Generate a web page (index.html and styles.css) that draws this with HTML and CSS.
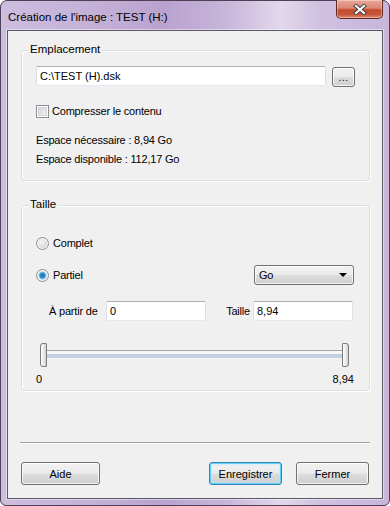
FILE: index.html
```html
<!DOCTYPE html>
<html lang="fr">
<head>
  <meta charset="UTF-8" />
  <title>Création de l'image</title>
  <link rel="stylesheet" href="styles.css">
</head>
<body>

<div class="window">
  <div class="titlebar">
    <span class="title">Création de l'image : TEST (H:)</span>
    <button class="close-btn" title="Fermer">
      <svg width="16" height="11" viewBox="0 0 16 11">
        <path d="M4 2 L12 9 M12 2 L4 9" stroke="#3e3a40" stroke-width="4" stroke-linecap="square" fill="none"/>
        <path d="M4 2 L12 9 M12 2 L4 9" stroke="#ffffff" stroke-width="2.2" stroke-linecap="square" fill="none"/>
      </svg>
    </button>
  </div>

  <div class="client">
    <!-- Emplacement -->
    <div class="group group-location">
      <div class="group-title">Emplacement</div>
      <div class="path-row">
        <input class="textbox path-input" type="text" value="C:\TEST (H).dsk">
        <button class="btn browse-btn">...</button>
      </div>
      <label class="check-row"><span class="checkbox"></span>Compresser le contenu</label>
      <div class="info first">Espace nécessaire : 8,94 Go</div>
      <div class="info">Espace disponible : 112,17 Go</div>
    </div>

    <!-- Taille -->
    <div class="group group-size">
      <div class="group-title">Taille</div>
      <div class="radio-row complet-row"><span class="radio"></span>Complet</div>
      <div class="radio-row partial-row">
        <span class="radio checked"></span>Partiel
        <div class="select">Go<span class="select-arrow"></span></div>
      </div>
      <div class="range-fields">
        <span class="field-label">À partir de</span>
        <input class="textbox" type="text" value="0">
        <span class="field-label right">Taille</span>
        <input class="textbox" type="text" value="8,94">
      </div>
      <div class="slider">
        <span class="thumb thumb-left"></span>
        <span class="track"><span class="track-fill"></span></span>
        <span class="thumb thumb-right"></span>
      </div>
      <div class="slider-labels">
        <span>0</span>
        <span>8,94</span>
      </div>
    </div>

    <div class="footer">
      <div class="separator"></div>
      <div class="buttons">
        <button class="btn btn-help">Aide</button>
        <span class="spacer"></span>
        <button class="btn btn-default">Enregistrer</button>
        <button class="btn">Fermer</button>
      </div>
    </div>
  </div>
</div>

</body>
</html>
```

FILE: styles.css
```css
* {
  box-sizing: border-box;
}

body {
  margin: 0;
  background: #fff;
  font-family: "Liberation Sans", Arial, sans-serif;
  font-size: 11px;
  color: #000;
}

.window {
  width: 390px;
  height: 506px;
  border: 1px solid #4d4157;
  border-radius: 7px 7px 6px 6px;
  padding: 0 6px 6px 6px;
  display: flex;
  flex-direction: column;
  background: #c6b2d8;
  background-image: linear-gradient(90deg, #cdbddf 0%, #c4b0d7 25%, #b9a3ce 42%, #c7b5da 58%, #e2d8ec 72%, #d0c1e1 82%, #c8b5da 100%);
}

.titlebar {
  height: 29px;
  display: flex;
  align-items: flex-start;
  justify-content: space-between;
}

.title {
  font-size: 11.5px;
  line-height: 15px;
  padding: 9px 0 0 1px;
}

.close-btn {
  width: 47px;
  height: 19px;
  margin-top: -1px;
  padding: 0;
  border: 1px solid #5e2a22;
  border-top: none;
  border-radius: 0 0 5px 5px;
  background: linear-gradient(180deg, #e9a99a 0%, #db8672 45%, #c44a30 55%, #c9553a 80%, #e08a6c 100%);
  box-shadow: inset 0 0 0 1px rgba(255,255,255,0.35);
  display: flex;
  align-items: center;
  justify-content: center;
}

.client {
  flex: 1;
  background: #f0f0f0;
  border: 1px solid #5d5866;
  box-shadow: 0 0 0 1px rgba(255,255,255,0.45);
  display: flex;
  flex-direction: column;
}

/* group boxes */
.group {
  margin: 0 12px 0 13px;
  border: 1px solid #d5dfe5;
  border-radius: 3px;
  box-shadow: inset 1px 1px 0 #fff, 1px 1px 0 #fff;
  padding: 0 14px 13px 14px;
}

.group-location {
  margin-top: 19px;
}

.group-size {
  margin-top: 24px;
  padding-bottom: 4px;
}

.group-title {
  width: max-content;
  margin: -10px 0 0 -8px;
  padding: 0 2px;
  font-size: 11.5px;
  line-height: 16px;
  background: #f0f0f0;
}

.textbox {
  height: 20px;
  margin: 0;
  padding: 0 3px;
  font: inherit;
  color: #000;
  background: #fff;
  border: 1px solid #dbdfe6;
  border-top-color: #abadb3;
  border-bottom-color: #e3e9ef;
  border-radius: 2px;
  outline: none;
}

.path-row {
  display: flex;
  gap: 6px;
  margin-top: 9px;
}

.path-input {
  width: 291px;
}

.btn {
  height: 23px;
  padding: 0;
  font: inherit;
  color: #000;
  border: 1px solid #707070;
  border-radius: 3px;
  background: linear-gradient(180deg, #f2f2f2 0%, #ebebeb 48%, #dddddd 52%, #cfcfcf 100%);
  box-shadow: inset 0 0 0 1px rgba(255,255,255,0.75);
}

.browse-btn {
  width: 23px;
  height: 20px;
  margin-top: 1px;
  line-height: 14px;
  padding-top: 2px;
  font-size: 10px;
  letter-spacing: 0.5px;
}

.check-row {
  display: flex;
  align-items: center;
  gap: 3px;
  height: 16px;
  margin-top: 16px;
  letter-spacing: -0.2px;
}

.checkbox {
  width: 13px;
  height: 13px;
  border: 1px solid #8e8f8f;
  background: linear-gradient(135deg, #cbcfd5 0%, #f6f6f6 100%);
  box-shadow: inset 0 0 0 1px #fff, inset 0 0 0 2px #d0d3d8;
}

.info {
  line-height: 16px;
  margin-top: 3px;
  letter-spacing: -0.2px;
}

.info.first {
  margin-top: 13px;
}

/* radios */
.radio-row {
  display: flex;
  align-items: center;
  gap: 4px;
  letter-spacing: -0.2px;
}

.complet-row {
  height: 16px;
  margin-top: 23px;
}

.partial-row {
  height: 20px;
  margin-top: 14px;
  margin-right: 1px;
}

.radio {
  width: 13px;
  height: 13px;
  border-radius: 50%;
  border: 1px solid #8e8f8f;
  background: radial-gradient(circle at 40% 35%, #f4f4f4 0%, #d4d6d8 70%, #c8cacc 100%);
  box-shadow: inset 0 0 0 1px #f8f8f8;
}

.radio.checked {
  background: radial-gradient(circle, #1d6fa5 0%, #2a8fd0 30%, #7cc4ef 45%, #e6e8ea 55%, #d0d2d4 100%);
}

.select {
  margin-left: auto;
  width: 100px;
  height: 20px;
  padding: 0 4px;
  display: flex;
  align-items: center;
  justify-content: space-between;
  border: 1px solid #707070;
  border-radius: 3px;
  background: linear-gradient(180deg, #f2f2f2 0%, #ebebeb 48%, #dddddd 52%, #cfcfcf 100%);
  box-shadow: inset 0 0 0 1px rgba(255,255,255,0.75);
}

.select-arrow {
  width: 0;
  height: 0;
  margin-right: 2px;
  border-left: 4px solid transparent;
  border-right: 4px solid transparent;
  border-top: 4px solid #000;
}

/* range inputs */
.range-fields {
  display: grid;
  grid-template-columns: 57px 100px 1fr 100px;
  align-items: center;
  margin: 16px 2px 0 13px;
}

.field-label {
  letter-spacing: -0.2px;
}

.field-label.right {
  text-align: right;
  padding-right: 3px;
}

/* slider */
.slider {
  display: flex;
  height: 24px;
  margin: 22px 6px 0 4px;
}

.thumb {
  width: 7px;
  height: 24px;
  border: 1px solid #7b7b7b;
  background: linear-gradient(90deg, #ffffff 0%, #e6e6e6 60%, #d2d2d2 100%);
}

.thumb-left {
  border-radius: 3px 1px 1px 3px;
}

.thumb-right {
  border-radius: 1px 3px 3px 1px;
}

.track {
  flex: 1;
  height: 9px;
  margin-top: 7px;
  border-top: 1px solid #a6a6a6;
  background: #f7f7f7;
  padding-top: 3px;
}

.track-fill {
  display: block;
  height: 4px;
  background: #c3d0df;
}

.slider-labels {
  display: flex;
  justify-content: space-between;
  line-height: 14px;
  margin: 5px 1px 0 0;
}

/* footer */
.footer {
  margin-top: auto;
  padding: 0 13px 13px 13px;
}

.separator {
  margin: 0 -1px 18px -1px;
  border-top: 1px solid #a0a0a0;
  border-bottom: 1px solid #fff;
}

.buttons {
  display: flex;
  gap: 14px;
}

.btn-help {
  width: 79px;
}

.spacer {
  flex: 1;
}

.buttons .btn {
  min-width: 73px;
}

.btn-default {
  border-color: #3c7fb1;
  box-shadow: inset 0 0 0 1px #5cd0f8, inset 0 0 2px 2px rgba(190,230,253,0.6);
}
```
